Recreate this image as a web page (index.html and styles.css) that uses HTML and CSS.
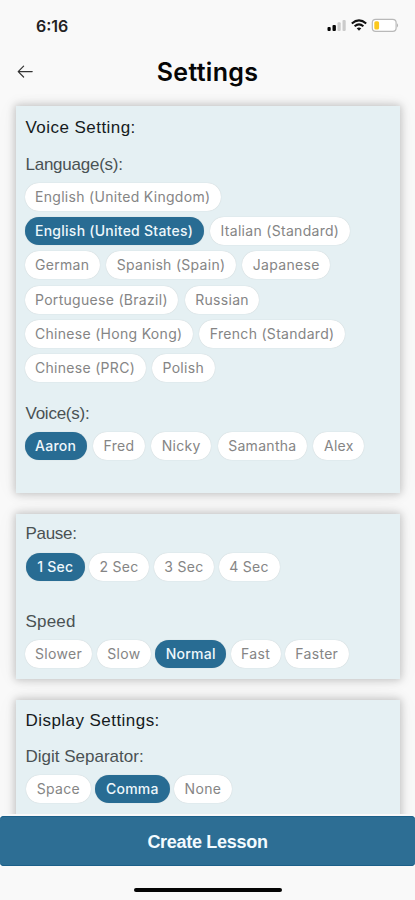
FILE: index.html
```html
<!DOCTYPE html>
<html lang="en">
<head>
<meta charset="utf-8">
<title>Settings</title>
<link rel="stylesheet" href="styles.css">
</head>
<body>
<div class="status">
  <span class="time">6:16</span>
  <svg class="indicators" width="72" height="16" viewBox="0 0 72 16">
    <rect x="0.5" y="10" width="3.2" height="4" rx="1" fill="#050505"/>
    <rect x="5.5" y="8" width="3.4" height="6" rx="1" fill="#050505"/>
    <rect x="10.5" y="5.2" width="3.2" height="8.8" rx="1" fill="#cbcbcb"/>
    <rect x="15.5" y="3" width="3.2" height="11" rx="1" fill="#cbcbcb"/>
    <g fill="none" stroke="#111" stroke-width="2">
      <path d="M24.8 6.6Q32 .2 39.2 6.6"/>
      <path d="M27.6 9.2Q32 5.5 36.4 9.2"/>
    </g>
    <path d="M29.7 11.3Q32 9.8 34.3 11.3L32 13.7Z" fill="#111"/>
    <rect x="45.3" y="2.4" width="23.8" height="12" rx="3.4" fill="#fff" stroke="#b9b9b9" stroke-width="1.2"/>
    <rect x="47.3" y="4.2" width="4.8" height="8.4" rx="1.6" fill="#fbc81c"/>
    <path d="M70.1 6.2Q72 8.4 70.1 10.6Z" fill="#aaa"/>
  </svg>
</div>
<header class="header">
  <svg class="back" width="18" height="16" viewBox="0 0 18 16" fill="none" stroke="#333" stroke-width="1.2" stroke-linecap="round" stroke-linejoin="round"><path d="M7.6 2.2L2.2 7.6L7.6 13M2.2 7.6H16.2"/></svg>
  <h1>Settings</h1>
</header>
<main class="content">
  <section class="card voice">
    <h2>Voice Setting:</h2>
    <h3>Language(s):</h3>
    <div class="pills">
      <div class="row"><span class="pill">English (United Kingdom)</span></div>
      <div class="row"><span class="pill on">English (United States)</span><span class="pill">Italian (Standard)</span></div>
      <div class="row"><span class="pill">German</span><span class="pill">Spanish (Spain)</span><span class="pill">Japanese</span></div>
      <div class="row"><span class="pill">Portuguese (Brazil)</span><span class="pill">Russian</span></div>
      <div class="row"><span class="pill">Chinese (Hong Kong)</span><span class="pill">French (Standard)</span></div>
      <div class="row"><span class="pill">Chinese (PRC)</span><span class="pill">Polish</span></div>
    </div>
    <h3 class="voices">Voice(s):</h3>
    <div class="row"><span class="pill on">Aaron</span><span class="pill">Fred</span><span class="pill">Nicky</span><span class="pill">Samantha</span><span class="pill">Alex</span></div>
  </section>
  <section class="card timing">
    <h3>Pause:</h3>
    <div class="row tight inset"><span class="pill on">1 Sec</span><span class="pill">2 Sec</span><span class="pill">3 Sec</span><span class="pill">4 Sec</span></div>
    <h3 class="speed">Speed</h3>
    <div class="row tight"><span class="pill">Slower</span><span class="pill">Slow</span><span class="pill on">Normal</span><span class="pill">Fast</span><span class="pill">Faster</span></div>
  </section>
  <section class="card display">
    <h2>Display Settings:</h2>
    <h3>Digit Separator:</h3>
    <div class="row tight inset"><span class="pill">Space</span><span class="pill on">Comma</span><span class="pill">None</span></div>
  </section>
</main>
<footer class="footer">
  <button class="create">Create Lesson</button>
  <div class="home"></div>
</footer>
</body>
</html>
```
FILE: styles.css
```css
* { box-sizing: border-box; }
body {
  margin: 0;
  height: 900px;
  overflow: hidden;
  display: flex;
  flex-direction: column;
  background: #f9f9f9;
  font-family: "Liberation Sans", Arial, sans-serif;
}
.status {
  height: 50px;
  padding: 17px 16px 0 36px;
  display: flex;
  justify-content: space-between;
}
.time {
  font: 600 16px/18px Inter, sans-serif;
  color: #222;
}
.header {
  height: 44px;
  padding-left: 16px;
  display: grid;
  grid-template-columns: 18px 1fr 34px;
  align-items: center;
}
.header h1 {
  margin: 0;
  text-align: center;
  font: 600 25px/44px Inter, sans-serif;
  letter-spacing: .3px;
  color: #060606;
}
.content {
  height: 720px;
  padding: 12px 15px 0 16px;
  display: flex;
  flex-direction: column;
  gap: 21px;
  overflow: hidden;
}
.card {
  flex: none;
  padding: 0 8.5px;
  background: #e5f0f3;
  box-shadow: 0 0 8px 1px rgba(0, 0, 0, .22), 0 0 22px rgba(0, 0, 0, .05);
}
.card h2, .card h3 {
  margin: 0;
  padding-left: 1px;
  font-size: 17px;
  line-height: 20px;
  font-weight: 400;
}
.card h2 {
  letter-spacing: .45px;
  color: #151b1d;
}
.card h3 {
  letter-spacing: 0;
  color: #4a5254;
}
.voice { height: 387px; padding-top: 12px; }
.voice h3 { letter-spacing: -.25px; }
.voice h2 + h3 { margin-top: 17px; }
.pills {
  margin-top: 8px;
  display: grid;
  gap: 6.2px;
}
.row { display: flex; gap: 6.4px; }
.tight { gap: 4.3px; }
.inset { padding-left: 1.5px; }
.pill {
  height: 28px;
  padding: 0 10.5px;
  border-radius: 14px;
  background: #fff;
  box-shadow: 0 0 1px rgba(0, 0, 0, .2);
  font: 400 14px/28px Inter, sans-serif;
  letter-spacing: .3px;
  color: #858585;
  white-space: nowrap;
}
.pill.on {
  background: #286c93;
  color: #eef7fb;
  font-weight: 500;
  letter-spacing: .25px;
}
.card .voices { margin: 22px 0 8px; }
.timing { height: 165px; padding-top: 10px; }
.timing h3 { letter-spacing: -.3px; }
.timing .row { margin-top: 8.5px; }
.timing .inset .pill { padding: 0 10.7px; }
.timing .inset .pill.on { padding: 0 11.2px; }
.timing .speed { margin-top: 31px; letter-spacing: .2px; }
.display { height: 165px; padding-top: 11px; }
.display h2 + h3 { margin-top: 16px; }
.display .row { margin-top: 8px; }
.display .pill { padding: 0 10.8px; }
.footer {
  height: 86px;
  padding-top: 2px;
  display: flex;
  flex-direction: column;
  align-items: center;
}
.create {
  width: 100%;
  height: 50px;
  padding: 2px 0 0;
  border: 0;
  border-radius: 4px;
  background: #2d6e94;
  box-shadow: inset 0 1px #1c6089, inset 0 -1px #1c6089;
  color: #f3fbff;
  font: 700 18px/48px "Liberation Sans", Arial, sans-serif;
  letter-spacing: -.3px;
}
.home {
  width: 148px;
  height: 4.5px;
  margin-top: 21.5px;
  border-radius: 3px;
  background: #050505;
}
```
